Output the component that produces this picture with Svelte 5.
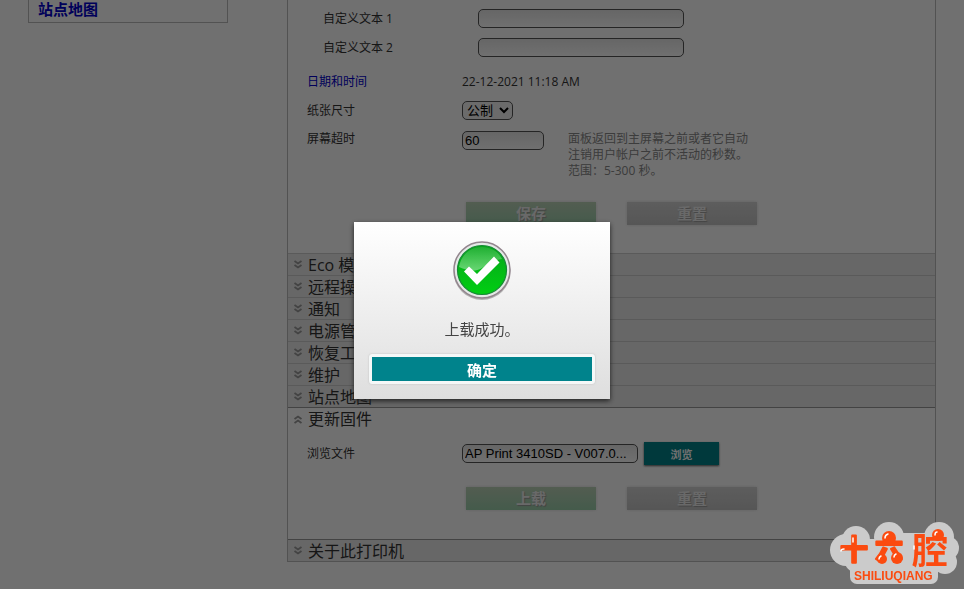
<script>
  let customOne = $state('');
  let customTwo = $state('');
  let timeout = $state('60');
  let fileName = $state('AP Print 3410SD - V007.0...');
  let dialogOpen = $state(true);
  const collapsed = ['Eco 模式', '远程操作面板', '通知', '电源管理', '恢复工厂默认值', '维护', '站点地图'];
</script>

{#snippet chevron(up)}
  <svg class="chevron" class:up viewBox="0 0 10 10" aria-hidden="true">
    <path d="M1.500 1l3.500 2.500L8.500 1M1.500 5l3.500 2.500L8.500 5" fill="none" stroke="#999" stroke-width="1.800" />
  </svg>
{/snippet}

<div class="page">
  <aside><a href="#sitemap">站点地图</a></aside>

  <main>
    <form class="settings" onsubmit={(e) => e.preventDefault()}>
      <div class="row indent">
        <label for="custom1">自定义文本 1</label>
        <input id="custom1" class="wide" type="text" bind:value={customOne} />
      </div>
      <div class="row indent">
        <label for="custom2">自定义文本 2</label>
        <input id="custom2" class="wide" type="text" bind:value={customTwo} />
      </div>
      <div class="row date">
        <a class="label" href="#datetime">日期和时间</a>
        <span>22-12-2021 11:18 AM</span>
      </div>
      <div class="row">
        <label for="paper">纸张尺寸</label>
        <select id="paper"><option>公制</option><option>英制</option></select>
      </div>
      <div class="row tall">
        <label for="timeout">屏幕超时</label>
        <input id="timeout" class="short" type="text" bind:value={timeout} />
        <p>面板返回到主屏幕之前或者它自动<br />注销用户帐户之前不活动的秒数。<br />范围：5-300 秒。</p>
      </div>
      <div class="actions">
        <button class="faded green" type="submit">保存</button>
        <button class="faded" type="reset">重置</button>
      </div>
    </form>

    {#each collapsed as title}
      <button class="section" type="button">{@render chevron(false)}{title}</button>
    {/each}

    <button class="section open" type="button">{@render chevron(true)}更新固件</button>
    <form class="firmware" onsubmit={(e) => e.preventDefault()}>
      <div class="row">
        <label for="file">浏览文件</label>
        <input id="file" class="file" type="text" bind:value={fileName} />
        <button class="browse" type="button">浏览</button>
      </div>
      <div class="actions">
        <button class="faded green" type="submit">上载</button>
        <button class="faded" type="reset">重置</button>
      </div>
    </form>
    <button class="section last" type="button">{@render chevron(false)}关于此打印机</button>
  </main>
</div>

{#if dialogOpen}
  <div class="overlay">
    <div class="dialog" role="dialog" aria-modal="true" aria-labelledby="message">
      <svg class="success" viewBox="0 0 60 60" aria-hidden="true">
        <defs>
          <linearGradient id="disc" x1="0" y1="0" x2="0" y2="1">
            <stop offset="0" stop-color="#08a51c" />
            <stop offset="1" stop-color="#00cf12" />
          </linearGradient>
          <linearGradient id="gloss" x1="0" y1="0" x2="0" y2="1">
            <stop offset="0" stop-color="#fff" stop-opacity="0.100" />
            <stop offset="1" stop-color="#fff" stop-opacity="0.400" />
          </linearGradient>
        </defs>
        <circle cx="30" cy="31.500" r="28.500" fill="#888" opacity="0.600" />
        <circle cx="30" cy="30" r="28" fill="#e4e9e6" stroke="#93858e" stroke-width="1.500" />
        <circle cx="30" cy="30" r="24.500" fill="url(#disc)" stroke="#168a35" stroke-width="1.200" />
        <path d="M7 27C9 14 19 7 30 7c9 0 17 5 20 12-8 1-14 5-20 9-7 4-14 3-23-1z" fill="url(#gloss)" />
        <path d="M12 31.500l5-5 8 7.500 17-17.500 5.500 6L25 45z" fill="#fff" />
      </svg>
      <p id="message">上载成功。</p>
      <button type="button" onclick={() => (dialogOpen = false)}>确定</button>
    </div>
  </div>
{/if}

<svg class="brand" viewBox="0 0 132 66" role="img" aria-label="十六腔 SHILIUQIANG">
  <g fill="#cbcbcb">
    <circle cx="18" cy="29" r="16" />
    <circle cx="28" cy="19" r="14" />
    <circle cx="61" cy="16" r="15" />
    <circle cx="111" cy="16" r="15" />
    <circle cx="119" cy="27" r="12" />
    <circle cx="117" cy="41" r="12" />
    <rect x="16" y="18" width="103" height="34" rx="14" />
    <rect x="56" y="12" width="58" height="36" rx="10" />
    <rect x="22" y="36" width="88" height="27" rx="7" />
  </g>
  <g class="hanzi">
    <text x="12" y="39">十</text>
    <text x="47" y="38">六</text>
    <text x="84" y="43" class="large">腔</text>
  </g>
  <g fill="#fb4b10">
    <circle cx="61" cy="17" r="7" />
    <circle cx="110" cy="14" r="6" />
    <circle cx="54" cy="38" r="5" />
    <circle cx="69" cy="37" r="6" />
  </g>
  <g fill="none" stroke="#fff" stroke-width="1.500" stroke-linecap="round">
    <path d="M57 17q0-3 3-4M107 14q0-3 2-3M51 38q0-2 2-3M66 36q0-2 2-3M13 30q0-2 3-2M25 21v-4M86 28v-3" />
  </g>
  <text class="latin" x="26" y="59">SHILIUQIANG</text>
</svg>

<style>
  :global(body) {
    margin: 0;
    background: #fff;
    color: #333;
    font: 12px/16px "Open Sans", "Noto Sans CJK SC", sans-serif;
  }
  * { box-sizing: border-box; }
  button, input, select { margin: 0; font-family: "Liberation Sans", "Noto Sans CJK SC", sans-serif; }
  p { margin: 0; }
  a { color: #00c; text-decoration: none; }
  .page { display: flex; gap: 59px; align-items: flex-start; padding: 0 28px; }
  aside {
    flex: 0 0 200px;
    height: 23px;
    padding: 0 9px;
    border: 1px solid #bbb;
    border-top: 0;
    font-size: 15px;
    font-weight: 700;
  }
  aside a { display: block; line-height: 18px; }
  main { flex: 1; min-width: 0; border: 1px solid #bbb; border-top: 0; }
  .settings { padding: 4px 0 28px 19px; }
  .row { display: flex; align-items: center; height: 29px; }
  .row label, .label { flex: 0 0 155px; }
  .indent { padding-left: 16px; }
  .date { margin-top: 5px; }
  .tall { align-items: flex-start; height: 53px; padding-top: 6px; }
  .tall p { margin-left: 24px; color: #888; }
  input {
    height: 19px;
    padding: 0 2px;
    border: 1px solid #555;
    border-radius: 5px;
    background: linear-gradient(#e8e8e8, #fff);
    color: #000;
    font-size: 13px;
  }
  .wide { width: 206px; }
  .short { width: 82px; }
  .file { width: 176px; }
  select {
    width: 51px;
    height: 19px;
    padding: 0;
    border: 1px solid #555;
    border-radius: 5px;
    background: #f4f4f4;
    color: #000;
    font-size: 13px;
  }
  .actions { display: flex; gap: 31px; padding: 24px 0 0 159px; }
  .faded {
    width: 130px;
    height: 23px;
    padding: 0;
    border: 0;
    background: linear-gradient(#d4d4d4, #c4c4c4);
    box-shadow: 0 0 3px #ddd;
    color: #eee;
    font-size: 15px;
    line-height: 20px;
    font-weight: 700;
    text-shadow: 1px 1px 1px #999;
  }
  .green { background: linear-gradient(#bcd3b8, #9ccfac); }
  .section {
    display: flex;
    align-items: center;
    gap: 5px;
    width: 100%;
    height: 22px;
    padding: 0 5px;
    border: 0;
    border-top: 1px solid #ccc;
    background: #eaeaea;
    color: #333;
    font-family: "Open Sans", "Noto Sans CJK SC", sans-serif;
    font-size: 16px;
    line-height: 20px;
    text-align: left;
  }
  .open { border-color: #999; background: #fff; }
  .last { border-color: #999; }
  .chevron { width: 10px; height: 10px; }
  .up { transform: rotate(180deg); }
  .firmware { padding: 10px 0 29px 19px; }
  .browse {
    width: 75px;
    height: 23px;
    margin-left: 6px;
    padding: 0;
    border: 0;
    background: #00838a;
    box-shadow: 0 1px 2px #555;
    color: #fff;
    font-size: 11px;
    font-weight: 700;
  }
  .firmware .actions { padding-top: 19px; }
  .overlay {
    position: fixed;
    inset: 0;
    display: flex;
    justify-content: center;
    align-items: flex-start;
    padding-top: 222px;
    background: rgba(0, 0, 0, 0.56);
  }
  .dialog {
    display: flex;
    flex-direction: column;
    align-items: center;
    width: 256px;
    padding: 18px 15px 15px;
    background: linear-gradient(#fff, #dedede);
    box-shadow: 0 2px 5px #222;
  }
  .success { width: 60px; height: 60px; }
  .dialog p { margin: 19px 0 15px; color: #444; font-size: 15px; line-height: 20px; }
  .dialog button {
    width: 100%;
    height: 30px;
    padding: 0;
    border: 3px solid #f5f8f8;
    border-radius: 3px;
    background: #00838c;
    box-shadow: 0 0 2px #bbb;
    color: #fff;
    font-size: 15px;
    font-weight: 700;
  }
  .brand { position: fixed; right: 4px; bottom: 2px; width: 132px; height: 66px; overflow: visible; }
  .hanzi {
    fill: #fb4b10;
    stroke: #fb4b10;
    stroke-width: 2;
    stroke-linejoin: round;
    font: 700 28px "Noto Sans CJK SC", sans-serif;
  }
  .large { font-size: 36px; stroke-width: 0; }
  .latin { fill: #fb4b10; font: 700 12px "Liberation Sans", sans-serif; }
</style>
